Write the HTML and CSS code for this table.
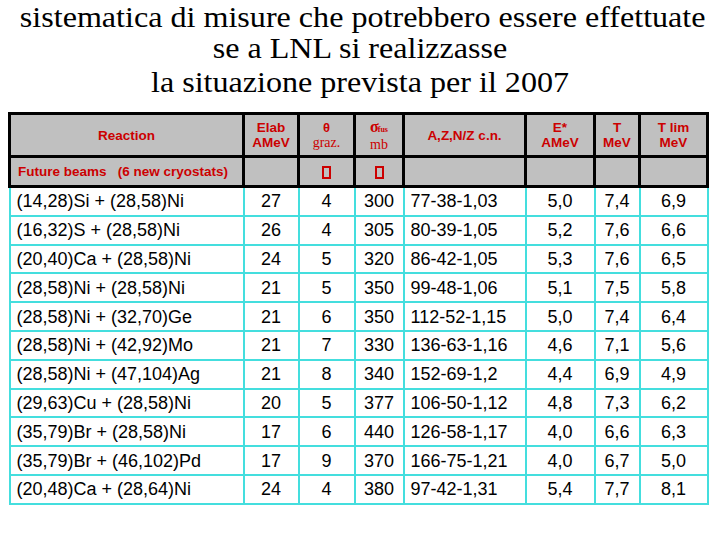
FILE: index.html
```html
<!DOCTYPE html>
<html>
<head>
<meta charset="utf-8">
<link rel="stylesheet" href="styles.css">
</head>
<body>
<div class="title">
<div class="t1">sistematica di misure che potrebbero essere effettuate</div>
<div class="tl">se a LNL si realizzasse</div>
<div class="tl">la situazione prevista per il 2007</div>
</div>
<table class="grid">
<colgroup>
<col class="c1"><col class="c2"><col class="c3"><col class="c4"><col class="c5"><col class="c6"><col class="c7"><col class="c8">
</colgroup>
<thead>
<tr class="hrow">
<th>Reaction</th>
<th>Elab<br>AMeV</th>
<th><span class="sym">θ</span><br><span class="ser">graz.</span></th>
<th><span class="ser sig">σ<sub>fus</sub></span><br><span class="ser">mb</span></th>
<th>A,Z,N/Z c.n.</th>
<th>E*<br>AMeV</th>
<th>T<br>MeV</th>
<th>T lim<br>MeV</th>
</tr>
<tr class="srow">
<th class="left">Future beams &nbsp; (6 new cryostats)</th>
<th></th>
<th><span class="box"></span></th>
<th><span class="box"></span></th>
<th></th><th></th><th></th><th></th>
</tr>
</thead>
<tbody>
<tr><td class="left">(14,28)Si + (28,58)Ni</td><td>27</td><td>4</td><td>300</td><td class="left">77-38-1,03</td><td>5,0</td><td>7,4</td><td>6,9</td></tr>
<tr><td class="left">(16,32)S + (28,58)Ni</td><td>26</td><td>4</td><td>305</td><td class="left">80-39-1,05</td><td>5,2</td><td>7,6</td><td>6,6</td></tr>
<tr><td class="left">(20,40)Ca + (28,58)Ni</td><td>24</td><td>5</td><td>320</td><td class="left">86-42-1,05</td><td>5,3</td><td>7,6</td><td>6,5</td></tr>
<tr><td class="left">(28,58)Ni + (28,58)Ni</td><td>21</td><td>5</td><td>350</td><td class="left">99-48-1,06</td><td>5,1</td><td>7,5</td><td>5,8</td></tr>
<tr><td class="left">(28,58)Ni + (32,70)Ge</td><td>21</td><td>6</td><td>350</td><td class="left">112-52-1,15</td><td>5,0</td><td>7,4</td><td>6,4</td></tr>
<tr><td class="left">(28,58)Ni + (42,92)Mo</td><td>21</td><td>7</td><td>330</td><td class="left">136-63-1,16</td><td>4,6</td><td>7,1</td><td>5,6</td></tr>
<tr><td class="left">(28,58)Ni + (47,104)Ag</td><td>21</td><td>8</td><td>340</td><td class="left">152-69-1,2</td><td>4,4</td><td>6,9</td><td>4,9</td></tr>
<tr><td class="left">(29,63)Cu + (28,58)Ni</td><td>20</td><td>5</td><td>377</td><td class="left">106-50-1,12</td><td>4,8</td><td>7,3</td><td>6,2</td></tr>
<tr><td class="left">(35,79)Br + (28,58)Ni</td><td>17</td><td>6</td><td>440</td><td class="left">126-58-1,17</td><td>4,0</td><td>6,6</td><td>6,3</td></tr>
<tr><td class="left">(35,79)Br + (46,102)Pd</td><td>17</td><td>9</td><td>370</td><td class="left">166-75-1,21</td><td>4,0</td><td>6,7</td><td>5,0</td></tr>
<tr><td class="left">(20,48)Ca + (28,64)Ni</td><td>24</td><td>4</td><td>380</td><td class="left">97-42-1,31</td><td>5,4</td><td>7,7</td><td>8,1</td></tr>
</tbody>
</table>
</body>
</html>
```
FILE: styles.css
```css
html, body {
  margin: 0;
  padding: 0;
  background: #ffffff;
}
.title {
  font-family: "Liberation Serif", "Times New Roman", serif;
  font-weight: normal;
  font-size: 30px;
  text-align: center;
  color: #000;
  white-space: nowrap;
  height: 112px;
  transform: scaleX(1.07);
}
.t1 {
  line-height: 33px;
  margin-bottom: -2.5px;
  padding-left: 5px;
}
.tl {
  line-height: 34.5px;
}
.grid {
  margin-left: 8px;
  border-collapse: collapse;
  table-layout: fixed;
  width: 698px;
  font-family: "Liberation Sans", Arial, sans-serif;
}
.c1 { width: 234px; }
.c2 { width: 55px; }
.c3 { width: 56px; }
.c4 { width: 49px; }
.c5 { width: 122px; }
.c6 { width: 69px; }
.c7 { width: 45px; }
.c8 { width: 68px; }
.grid th {
  background: #c0c0c0;
  color: #cc0000;
  font-weight: bold;
  font-size: 13.5px;
  line-height: 15px;
  border: 3px solid #000;
  padding: 0 2px;
  text-align: center;
  vertical-align: middle;
}
.hrow th { height: 40px; }
.srow th { height: 27px; }
.grid th.left { text-align: left; padding-left: 7px; white-space: nowrap; }
.ser {
  font-family: "Liberation Serif", "Times New Roman", serif;
  font-weight: normal;
  font-size: 14px;
}
.sym { font-size: 13px; }
.sig { font-weight: bold; font-size: 16px; letter-spacing: -1px; }
.sig sub { font-size: 8px; vertical-align: 0; letter-spacing: 0; }
.box {
  display: inline-block;
  width: 5px;
  height: 9px;
  border: 2px solid #cc0000;
  vertical-align: middle;
}
.grid td {
  color: #000;
  font-size: 18px;
  line-height: 20px;
  height: 26.8px;
  padding: 0 3px;
  border: 2px solid #44dede;
  text-align: center;
  vertical-align: middle;
  white-space: nowrap;
}
.grid td.left { text-align: left; padding-left: 6px; }
```
